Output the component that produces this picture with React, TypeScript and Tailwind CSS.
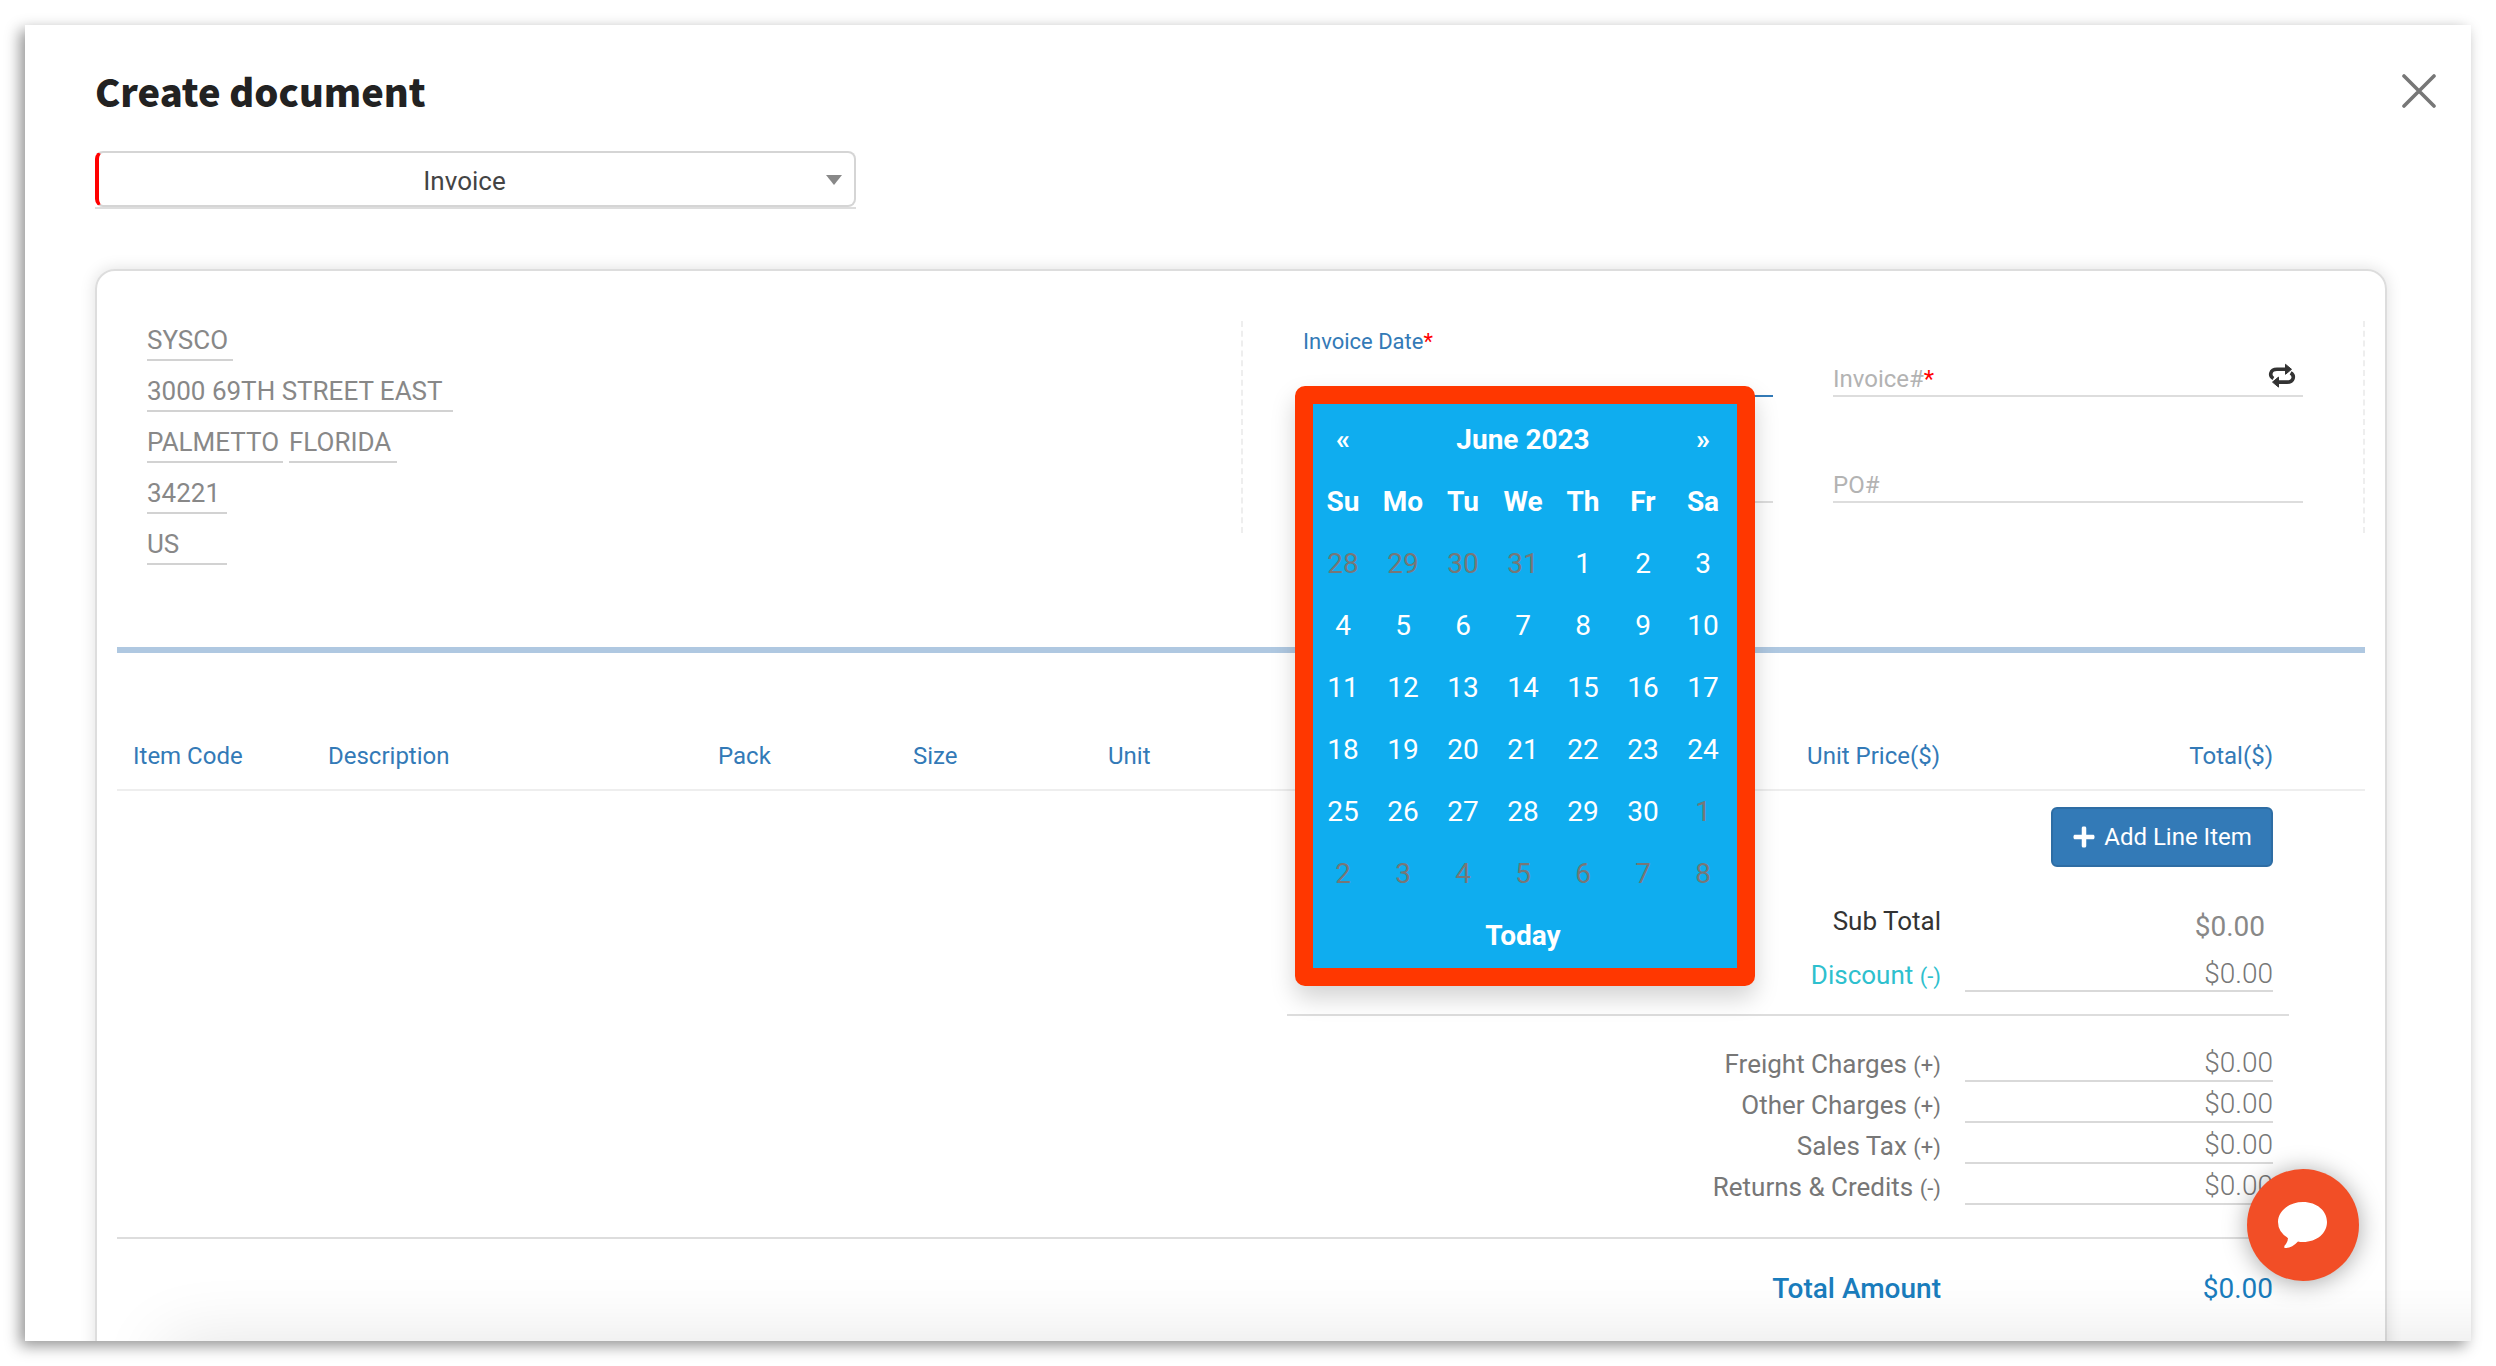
import React from "react";
import { FaPlus } from "react-icons/fa";

interface ChargeProps {
  label: string;
  sign: string;
}

const weekDays = ["Su", "Mo", "Tu", "We", "Th", "Fr", "Sa"];

const weeks = [
  [28, 29, 30, 31, 1, 2, 3],
  [4, 5, 6, 7, 8, 9, 10],
  [11, 12, 13, 14, 15, 16, 17],
  [18, 19, 20, 21, 22, 23, 24],
  [25, 26, 27, 28, 29, 30, 1],
  [2, 3, 4, 5, 6, 7, 8],
];

const charges: ChargeProps[] = [
  { label: "Freight Charges", sign: "(+)" },
  { label: "Other Charges", sign: "(+)" },
  { label: "Sales Tax", sign: "(+)" },
  { label: "Returns & Credits", sign: "(-)" },
];

// Days of the previous and next month are greyed out
const isOutside = (row: number, day: number) =>
  (row === 0 && day > 7) || (row >= 4 && day < 10);

const DatePicker = () => (
  <div className="absolute -left-2 top-[65px] z-10 w-[460px] rounded-[10px] border-[18px] border-[#ff3700] bg-[#0fadef] pt-[5px] pr-1 pb-px text-[28px] leading-8 text-white shadow-[0_12px_24px_rgba(0,0,0,0.175)]">
    <table className="w-full table-fixed text-center">
      <thead>
        <tr className="h-[62px]">
          <th>
            <button type="button" aria-label="Previous month">«</button>
          </th>
          <th colSpan={5}>June 2023</th>
          <th>
            <button type="button" aria-label="Next month">»</button>
          </th>
        </tr>
        <tr className="h-[62px]">
          {weekDays.map((day) => (
            <th key={day}>{day}</th>
          ))}
        </tr>
      </thead>
      <tbody>
        {weeks.map((week, row) => (
          <tr key={row} className="h-[62px]">
            {week.map((day) => (
              <td key={day} className={isOutside(row, day) ? "text-[#777777]" : ""}>
                <button type="button">{day}</button>
              </td>
            ))}
          </tr>
        ))}
      </tbody>
      <tfoot>
        <tr className="h-[62px]">
          <th colSpan={7}>
            <button type="button">Today</button>
          </th>
        </tr>
      </tfoot>
    </table>
  </div>
);

const Address = () => (
  <div className="flex flex-col gap-[11px] pl-[30px] text-[26px] leading-[38px] text-[#888888]">
    <div className="flex">
      <span className="w-[86px] border-b-2 border-[#d2d2d2]">SYSCO</span>
    </div>
    <div className="flex">
      <span className="w-[306px] border-b-2 border-[#d2d2d2]">3000 69TH STREET EAST</span>
    </div>
    <div className="flex gap-1.5">
      <span className="w-[136px] border-b-2 border-[#d2d2d2]">PALMETTO</span>
      <span className="w-[108px] border-b-2 border-[#d2d2d2]">FLORIDA</span>
    </div>
    <div className="flex">
      <span className="w-20 border-b-2 border-[#d2d2d2]">34221</span>
    </div>
    <div className="flex">
      <span className="w-20 border-b-2 border-[#d2d2d2]">US</span>
    </div>
  </div>
);

const Charge: React.FC<ChargeProps> = ({ label, sign }) => {
  const id = label.toLowerCase().replace(/\W+/g, "-");
  return (
    <div className="flex items-end gap-6 text-[#777777]">
      <label htmlFor={id} className="flex-1 text-right text-[26px] leading-8">
        {label} <span className="text-[22px]">{sign}</span>
      </label>
      <input
        id={id}
        defaultValue="$0.00"
        className="h-[41px] w-[308px] border-b-2 border-[#d9d9d9] pt-1 text-right text-[28px] font-light text-[#777777] outline-none"
      />
    </div>
  );
};

const App = () => {
  return (
    <div className="h-screen overflow-hidden bg-white p-[25px] font-['Roboto',sans-serif]">
      <main className="relative h-full overflow-hidden bg-white pl-[70px] pr-[84px] shadow-[-5px_5px_14px_rgba(0,0,0,0.42)]">
        <header className="flex h-[126px] items-start justify-between pt-10">
          <h1 className="font-['Noto_Sans_CJK_SC','Open_Sans',sans-serif] text-[38px] font-black leading-[52px] text-[#222222]">
            Create document
          </h1>
          <button type="button" aria-label="Close" className="-mr-[49px] mt-[9px]">
            <svg width="34" height="34" viewBox="0 0 34 34" stroke="#777777" strokeWidth="3.6" strokeLinecap="round">
              <path d="M2 2L32 32M32 2L2 32" />
            </svg>
          </button>
        </header>

        <div className="relative w-[761px] border-b-2 border-[#dddddd]">
          <select
            aria-label="Document type"
            className="h-14 w-full appearance-none rounded-lg border-2 border-[#d5d5d5] border-l-4 border-l-[#ff0000] bg-white pr-6 pt-1 text-center text-[26px] text-[#444444] outline-none"
          >
            <option>Invoice</option>
          </select>
          <span className="pointer-events-none absolute right-3.5 top-6 border-x-8 border-t-[10px] border-x-transparent border-t-[#888888]" />
        </div>

        <section className="mt-[60px] h-[1200px] rounded-[20px] border-2 border-[#dddddd] px-5 pt-[50px] shadow-[0_0_16px_rgba(0,0,0,0.13)]">
          <div className="flex h-[326px]">
            <Address />
            <div className="ml-auto flex h-[212px] w-1/2 gap-[60px] border-x-2 border-dashed border-[#eeeeee] px-[60px]">
              {/* Date column, the picker opens over it */}
              <div className="relative flex-1">
                <label htmlFor="invoice-date" className="block h-[30px] pt-[5px] text-[22px] leading-8 text-[#337ab7]">
                  Invoice Date<span className="text-[#ff0000]">*</span>
                </label>
                <input id="invoice-date" className="block h-[46px] w-full border-b-2 border-[#337ab7] outline-none" />
                <input aria-label="Due date" className="mt-[60px] block h-[46px] w-full border-b-2 border-[#dddddd] outline-none" />
                <DatePicker />
              </div>
              <div className="flex-1 text-2xl text-[#b3b3b3]">
                <div className="flex h-[76px] items-end border-b-2 border-[#dddddd] pb-0.5">
                  <label htmlFor="invoice-number" className="leading-7">
                    Invoice#<span className="text-[#ff0000]">*</span>
                  </label>
                  <input id="invoice-number" className="min-w-0 flex-1 outline-none" />
                  <button type="button" aria-label="Generate number" className="mr-[7px] pb-1 text-[#333333]">
                    <svg width="28" height="26" viewBox="-1 -1 28 26" fill="none" stroke="currentColor">
                      <path strokeWidth="3.6" d="M4.4 14.5C0 12 1 5.3 8 5.3H16.5M21.6 8.9C26 11.4 25 18.1 18 18.1H9.5" />
                      <path strokeLinejoin="round" fill="currentColor" d="M16.5 .3L22.5 5.3L16.5 10.3ZM9.5 23.1L3.5 18.1L9.5 13.1Z" />
                    </svg>
                  </button>
                </div>
                <div className="flex h-[106px] items-end border-b-2 border-[#dddddd] pb-0.5">
                  <label htmlFor="po-number" className="leading-7">PO#</label>
                  <input id="po-number" className="min-w-0 flex-1 outline-none" />
                </div>
              </div>
            </div>
          </div>

          <div className="h-1.5 bg-[#afc8e1]" />

          <table className="mt-[77px] w-full table-fixed border-b-2 border-[#eeeeee] text-2xl text-[#337ab7]">
            <colgroup>
              <col className="w-[195px]" />
              <col className="w-[390px]" />
              <col className="w-[195px]" />
              <col className="w-[195px]" />
              <col className="w-[195px]" />
              <col />
              <col className="w-[333px]" />
              <col className="w-[76px]" />
            </colgroup>
            <thead>
              <tr className="h-[60px] align-top text-left *:px-4 *:pt-[10px] *:font-normal">
                <th>Item Code</th>
                <th>Description</th>
                <th>Pack</th>
                <th>Size</th>
                <th>Unit</th>
                <th className="text-right">Unit Price($)</th>
                <th className="text-right">Total($)</th>
                <th />
              </tr>
            </thead>
          </table>

          <div className="ml-auto mr-[76px] mt-4 w-[1002px] px-4">
            <div className="flex justify-end">
              <button
                type="button"
                className="flex h-[60px] w-[222px] items-center justify-center gap-2 rounded-md border-2 border-[#2e6da4] bg-[#337ab7] text-2xl text-white"
              >
                <FaPlus className="size-6" />
                Add Line Item
              </button>
            </div>
            <div className="mt-9 flex gap-6">
              <span className="flex-1 text-right text-[26px] leading-9 text-[#333333]">Sub Total</span>
              <span className="w-[308px] pr-2 pt-1.5 text-right text-[28px] leading-9 text-[#888888]">$0.00</span>
            </div>
            <div className="mt-1.5 flex items-end gap-6">
              <label htmlFor="discount" className="flex-1 text-right text-[26px] leading-[30px] text-[#2ec0ce]">
                Discount <span className="text-[22px]">(-)</span>
              </label>
              <input
                id="discount"
                defaultValue="$0.00"
                className="h-[41px] w-[308px] border-b-2 border-[#d9d9d9] pt-1.5 text-right text-[28px] font-light text-[#777777] outline-none"
              />
            </div>
          </div>
          <hr className="ml-auto mr-[76px] mt-[22px] w-[1002px] border-t-2 border-[#dddddd]" />
          <div className="mr-[92px] mt-[25px]">
            {charges.map((charge) => (
              <Charge key={charge.label} {...charge} />
            ))}
          </div>
          <hr className="mr-2 mt-8 border-t-2 border-[#dddddd]" />
          <div className="mr-[92px] mt-8 flex gap-6 text-[28px] leading-9 text-[#1a7dbd]">
            <span className="flex-1 text-right font-medium">Total Amount</span>
            <span className="w-[308px] text-right">$0.00</span>
          </div>
        </section>

        {/* Soft shade along the bottom edge */}
        <div className="pointer-events-none absolute -right-24 left-[140px] top-full h-20 shadow-[0_0_70px_rgba(0,0,0,0.11)]" />

        <button
          type="button"
          aria-label="Open chat"
          className="absolute bottom-[60px] right-[112px] flex size-28 items-center justify-center rounded-full bg-[#f24e26] shadow-[0_2px_24px_rgba(0,0,0,0.35)]"
        >
          <svg width="50" height="46" viewBox="0 0 50 46" fill="white">
            <path d="M25 0C39 0 49 9 49 20S39 40 25 40Q22 40 20 39.5Q14 46 7 46Q5 45 8 42Q10 39 10 36Q0 30 0 20C0 9 11 0 25 0Z" />
          </svg>
        </button>
      </main>
    </div>
  );
};

export default App;
